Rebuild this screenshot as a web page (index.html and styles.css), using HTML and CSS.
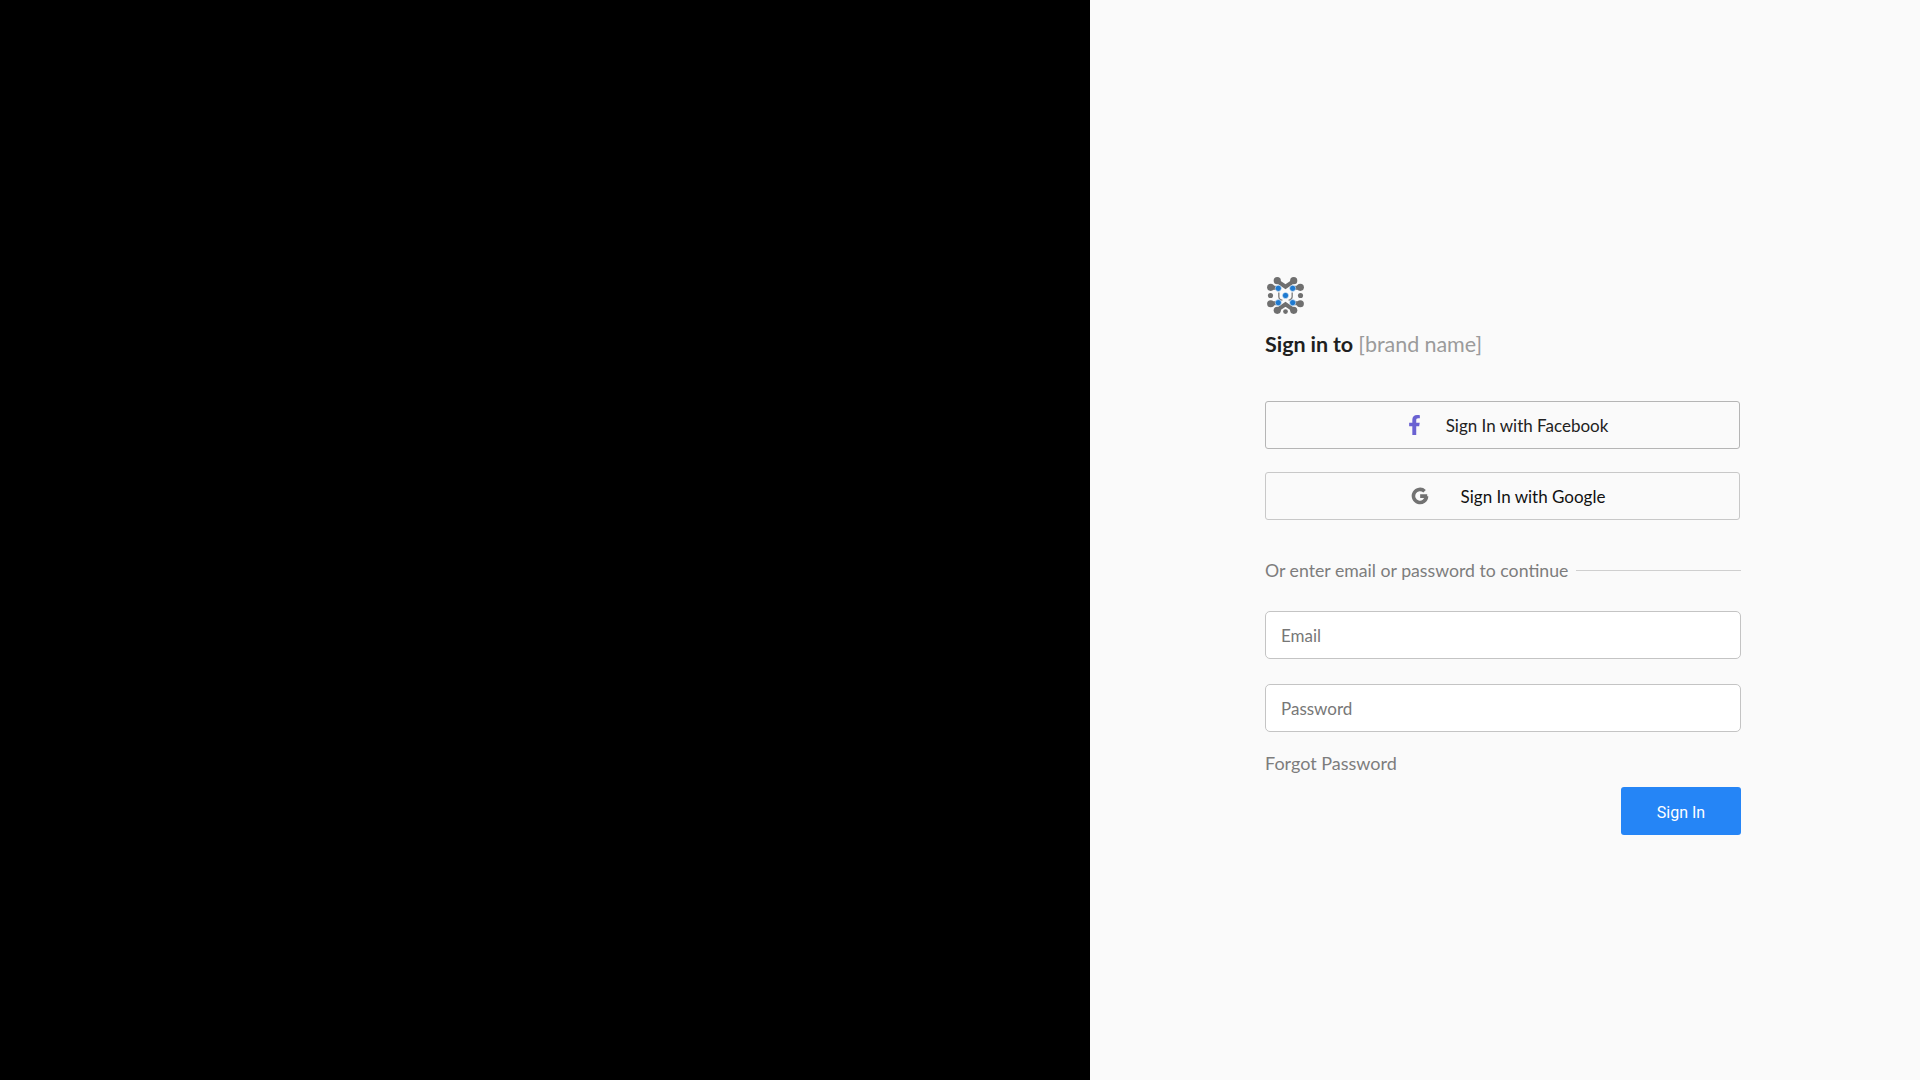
FILE: index.html
```html
<!DOCTYPE html>
<html lang="en">
<head>
<meta charset="utf-8">
<title>Sign in</title>
<link rel="stylesheet" href="styles.css">
</head>
<body>
<main class="split">
  <aside class="hero"></aside>
  <section class="panel">
    <form class="card">
      <svg class="logo" viewBox="0 0 36 36" width="37" height="37" aria-hidden="true">
        <g fill="none" stroke="#6f6f6f" stroke-width="4" stroke-linecap="round">
          <path d="M10 4 L18 9.5 L26 4"/><path d="M10 32 L18 26.5 L26 32"/>
          <path d="M4 10 L11 11"/><path d="M32 10 L25 11"/>
          <path d="M4 26 L11 25"/><path d="M32 26 L25 25"/>
        </g>
        <g fill="#6f6f6f">
          <circle cx="10" cy="3.6" r="3.5"/><circle cx="26" cy="3.6" r="3.5"/>
          <circle cx="10" cy="32.4" r="3.5"/><circle cx="26" cy="32.4" r="3.5"/><circle cx="18" cy="33.6" r="2.3"/>
          <circle cx="3.6" cy="10" r="3.5"/><circle cx="3.4" cy="18" r="2.5"/><circle cx="3.6" cy="26" r="3.5"/>
          <circle cx="32.4" cy="10" r="3.5"/><circle cx="32.6" cy="18" r="2.5"/><circle cx="32.4" cy="26" r="3.5"/>
        </g>
        <path d="M11.5 15v4a3.5 3.5 0 0 0 3.5 3.5M24.5 15v4a3.5 3.5 0 0 1-3.5 3.5" fill="none" stroke="#7d7d7d" stroke-width="1.3"/>
        <g fill="#1f7ad0" stroke="#fafafa" stroke-width=".5">
          <circle cx="11" cy="11" r="3"/><circle cx="25" cy="11" r="3"/>
          <circle cx="18" cy="18" r="3"/>
          <circle cx="11" cy="25" r="3"/><circle cx="25" cy="25" r="3"/>
        </g>
      </svg>
      <h1 class="title"><strong>Sign in to</strong> <span class="brand">[brand name]</span></h1>

      <button type="button" class="social social-fb">
        <svg class="fb-icon" viewBox="0 0 320 512" width="13" height="20" aria-hidden="true"><path fill="#6a62d2" d="M279.14 288l14.22-92.66h-88.91v-60.13c0-25.35 12.42-50.06 52.24-50.06h40.42V6.26S260.43 0 225.36 0c-73.22 0-121.08 44.38-121.08 124.72v70.62H22.89V288h81.39v224h100.17V288z"/></svg>
        <span>Sign In with Facebook</span>
      </button>
      <button type="button" class="social social-g">
        <svg class="g-icon" viewBox="0 0 24 24" width="18" height="18" aria-hidden="true"><path fill="none" stroke="#727272" stroke-width="4.8" d="M21.6 12.2H12.2M20.7 12.2A8.7 8.7 0 1 1 18.1 5.7"/></svg>
        <span>Sign In with Google</span>
      </button>

      <div class="divider"><span>Or enter email or password to continue</span><i></i></div>

      <input class="field field-email" type="text" placeholder="Email">
      <input class="field field-pass" type="password" placeholder="Password">

      <a class="forgot" href="#">Forgot Password</a>
      <div class="actions"><button type="button" class="submit">Sign In</button></div>
    </form>
  </section>
</main>
</body>
</html>
```
FILE: styles.css
```css
* { box-sizing: border-box; }
html, body { margin: 0; height: 100%; }
body { font-family: "Lato", "Liberation Sans", sans-serif; background: #fafafa; }

.split { display: flex; height: 1080px; overflow: hidden; }
.hero { width: 1090px; flex: none; background: #000; }
.panel { flex: 1; background: #fafafa; padding: 277px 0 0 175px; }
.card { width: 476px; display: flex; flex-direction: column; align-items: flex-start; }

.logo { display: block; margin-left: 2px; }
.title { margin: 17px 0 0; font-size: 21.5px; line-height: 26px; font-weight: 400; color: #9b9b9b; font-family: "Lato", sans-serif; word-spacing: -0.4px; }
.title strong { font-weight: 700; color: #1f1f1f; }

.social {
  display: flex; align-items: center; justify-content: center;
  width: 475px; height: 48px; padding: 0 0 0 11px; background: #fafafa;
  border: 1px solid #b5b5b5; border-radius: 3px;
  font-family: "Lato", sans-serif; font-size: 17px; color: #222; cursor: pointer;
}
.social-fb { margin-top: 44px; }
.social-g { margin-top: 23px; border-color: #c8c8c8; color: #111; }
.fb-icon { margin-right: 25px; }
.g-icon { margin-right: 32px; }

.divider { width: 476px; margin-top: 38px; display: flex; align-items: center; gap: 8px; height: 24px; font-family: "Lato", sans-serif; font-size: 17.7px; color: #7d7d7d; }
.divider i { flex: 1; height: 1px; background: #cfcfcf; }

.field {
  display: block; width: 476px; height: 48px; padding: 1px 15px 0; background: #fff;
  border: 1px solid #c4c4c4; border-radius: 5px;
  font-family: "Lato", sans-serif; font-size: 17px; color: #333; outline: none;
}
.field::placeholder { color: #777; opacity: 1; }
.field-email { margin-top: 29px; }
.field-pass { margin-top: 25px; }

.forgot { display: block; margin-top: 19px; height: 24px; line-height: 24px; font-family: "Lato", sans-serif; font-size: 18px; color: #7d7d7d; text-decoration: none; }
.actions { width: 476px; margin-top: 12px; display: flex; justify-content: flex-end; }
.submit { width: 120px; height: 48px; padding: 2px 0 0; border: 0; border-radius: 3px; background: #2585f6; color: #fff; font-family: "Roboto", sans-serif; font-size: 16px; cursor: pointer; }
```
